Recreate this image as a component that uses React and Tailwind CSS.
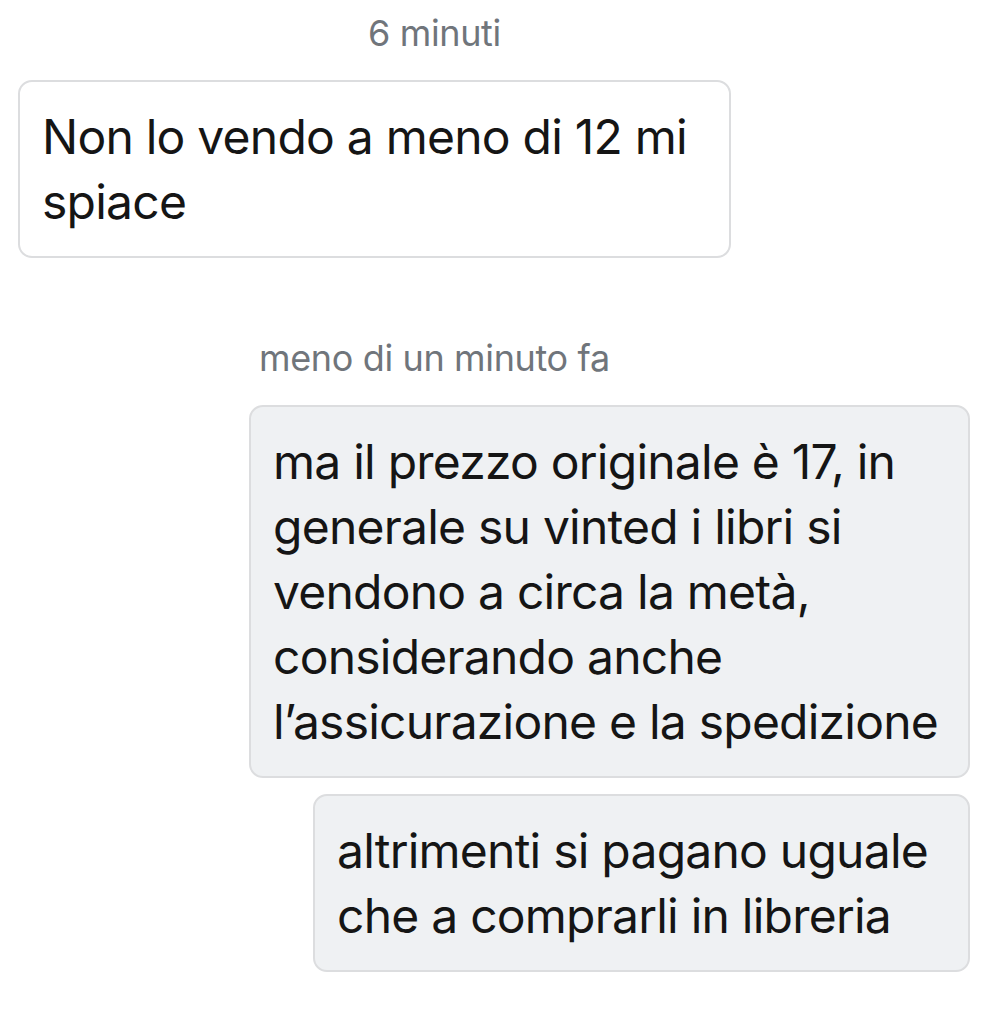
import React from 'react';

const messages = [
  {
    id: 1,
    time: '6 minuti',
    timeClass: 'ml-[368px]',
    items: [
      {
        text: 'Non lo vendo a meno di 12 mi spiace',
        mine: false,
        width: 'w-[713px]',
        side: 'ml-[18px]',
      },
    ],
  },
  {
    id: 2,
    time: 'meno di un minuto fa',
    timeClass: 'ml-[259px]',
    items: [
      {
        text: 'ma il prezzo originale è 17, in generale su vinted i libri si vendono a circa la metà, considerando anche l’assicurazione e la spedizione',
        mine: true,
        width: 'w-[721px]',
        side: 'ml-[249px]',
      },
      {
        text: 'altrimenti si pagano uguale che a comprarli in libreria',
        mine: true,
        width: 'w-[657px]',
        side: 'ml-[313px]',
      },
    ],
  },
];

const Bubble = ({ text, mine, width, side }) => (
  <div
    className={`${width} ${side} rounded-[14px] border-2 border-[#dcdddf] px-[22px] py-[22px] text-[48px] leading-[65px] tracking-[-0.016em] text-[#151515] ${
      mine ? 'bg-[#eff1f3]' : 'bg-white'
    }`}
  >
    {text}
  </div>
);

export default function App() {
  return (
    <div className="min-h-screen bg-white font-['Inter',sans-serif]">
      <div className="flex flex-col pt-[12px]">
        {messages.map((group, i) => (
          <div key={group.id} className={`flex flex-col ${i > 0 ? 'mt-[79px]' : ''}`}>
            <div className={`${group.timeClass} text-[36px] leading-[42px] tracking-[-0.01em] text-[#70757b]`}>
              {group.time}
            </div>
            <div className="mt-[26px] flex flex-col gap-[16px]">
              {group.items.map((m, j) => (
                <Bubble key={j} {...m} />
              ))}
            </div>
          </div>
        ))}
      </div>
    </div>
  );
}
